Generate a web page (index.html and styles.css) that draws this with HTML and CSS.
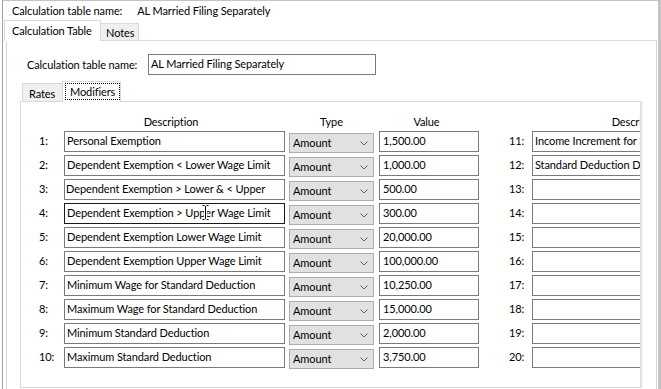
FILE: index.html
```html
<!DOCTYPE html>
<html>
<head>
<meta charset="utf-8">
<link rel="stylesheet" href="styles.css">
</head>
<body>
<div class="frame">
  <div class="title-row">
    <span class="title-label">Calculation table name:</span>
    <span class="title-value">AL Married Filing Separately</span>
  </div>
  <div class="tabs">
    <div class="tab tab-active">Calculation Table</div>
    <div class="tab tab-idle">Notes</div>
  </div>
  <div class="panel">
    <div class="name-row">
      <span class="name-label">Calculation table name:</span>
      <div class="field name-field">AL Married Filing Separately</div>
    </div>
    <div class="subtabs">
      <div class="subtab subtab-idle">Rates</div>
      <div class="subtab subtab-active"><span class="focus">Modifiers</span></div>
    </div>
    <div class="subpanel">
      <div class="grid">
        <div class="hdr hdr-desc c2">Description</div>
        <div class="hdr c3">Type</div>
        <div class="hdr hdr-val c4">Value</div>
        <div class="hdr hdr-desc c6">Description</div>

        <div class="num">1:</div><div class="field desc">Personal Exemption</div><div class="sel">Amount<svg class="chev" width="8" height="5" viewBox="0 0 8 5"><path d="M0.5 0.5 L4 4 L7.5 0.5" fill="none" stroke="#606060"/></svg></div><div class="field val">1,500.00</div><div class="num rnum">11:</div><div class="field desc">Income Increment for Standard Deduction</div>

        <div class="num">2:</div><div class="field desc">Dependent Exemption &lt; Lower Wage Limit</div><div class="sel">Amount<svg class="chev" width="8" height="5" viewBox="0 0 8 5"><path d="M0.5 0.5 L4 4 L7.5 0.5" fill="none" stroke="#606060"/></svg></div><div class="field val">1,000.00</div><div class="num rnum">12:</div><div class="field desc">Standard Deduction Decrement</div>

        <div class="num">3:</div><div class="field desc"><span class="scrolled">Dependent Exemption &gt; Lower &amp; &lt; Upper</span></div><div class="sel">Amount<svg class="chev" width="8" height="5" viewBox="0 0 8 5"><path d="M0.5 0.5 L4 4 L7.5 0.5" fill="none" stroke="#606060"/></svg></div><div class="field val">500.00</div><div class="num rnum">13:</div><div class="field desc"></div>

        <div class="num">4:</div><div class="field desc hover">Dependent Exemption &gt; Upper Wage Limit<svg class="ibeam" width="9" height="17" viewBox="0 0 9 17"><path d="M1.5 1.5 H3.5 M5.5 1.5 H7.5 M4.5 2 V15 M1.5 15.5 H3.5 M5.5 15.5 H7.5" fill="none" stroke="#fff" stroke-width="3"/><path d="M1.5 1.5 H3.5 M5.5 1.5 H7.5 M4.5 2 V15 M1.5 15.5 H3.5 M5.5 15.5 H7.5" fill="none" stroke="#000" stroke-width="1"/></svg></div><div class="sel">Amount<svg class="chev" width="8" height="5" viewBox="0 0 8 5"><path d="M0.5 0.5 L4 4 L7.5 0.5" fill="none" stroke="#606060"/></svg></div><div class="field val">300.00</div><div class="num rnum">14:</div><div class="field desc"></div>

        <div class="num">5:</div><div class="field desc">Dependent Exemption Lower Wage Limit</div><div class="sel">Amount<svg class="chev" width="8" height="5" viewBox="0 0 8 5"><path d="M0.5 0.5 L4 4 L7.5 0.5" fill="none" stroke="#606060"/></svg></div><div class="field val">20,000.00</div><div class="num rnum">15:</div><div class="field desc"></div>

        <div class="num">6:</div><div class="field desc">Dependent Exemption Upper Wage Limit</div><div class="sel">Amount<svg class="chev" width="8" height="5" viewBox="0 0 8 5"><path d="M0.5 0.5 L4 4 L7.5 0.5" fill="none" stroke="#606060"/></svg></div><div class="field val">100,000.00</div><div class="num rnum">16:</div><div class="field desc"></div>

        <div class="num">7:</div><div class="field desc">Minimum Wage for Standard Deduction</div><div class="sel">Amount<svg class="chev" width="8" height="5" viewBox="0 0 8 5"><path d="M0.5 0.5 L4 4 L7.5 0.5" fill="none" stroke="#606060"/></svg></div><div class="field val">10,250.00</div><div class="num rnum">17:</div><div class="field desc"></div>

        <div class="num">8:</div><div class="field desc">Maximum Wage for Standard Deduction</div><div class="sel">Amount<svg class="chev" width="8" height="5" viewBox="0 0 8 5"><path d="M0.5 0.5 L4 4 L7.5 0.5" fill="none" stroke="#606060"/></svg></div><div class="field val">15,000.00</div><div class="num rnum">18:</div><div class="field desc"></div>

        <div class="num">9:</div><div class="field desc">Minimum Standard Deduction</div><div class="sel">Amount<svg class="chev" width="8" height="5" viewBox="0 0 8 5"><path d="M0.5 0.5 L4 4 L7.5 0.5" fill="none" stroke="#606060"/></svg></div><div class="field val">2,000.00</div><div class="num rnum">19:</div><div class="field desc"></div>

        <div class="num">10:</div><div class="field desc">Maximum Standard Deduction</div><div class="sel">Amount<svg class="chev" width="8" height="5" viewBox="0 0 8 5"><path d="M0.5 0.5 L4 4 L7.5 0.5" fill="none" stroke="#606060"/></svg></div><div class="field val">3,750.00</div><div class="num rnum">20:</div><div class="field desc"></div>
      </div>
    </div>
  </div>
</div>
</body>
</html>
```
FILE: styles.css
```css
* { box-sizing: border-box; }
html, body {
  margin: 0;
  padding: 0;
  width: 661px;
  height: 389px;
  overflow: hidden;
  background: #fff;
}
body {
  font-family: "Lato", "Liberation Sans", sans-serif;
  font-size: 11px;
  letter-spacing: -0.1px;
  color: #000;
}
.frame {
  margin-left: 2px;
  width: 659px;
  height: 389px;
  overflow: hidden;
  border-left: 1px solid #a0a0a0;
  border-top: 1px solid #c4c4c4;
  border-right: 3px solid #c4c4c4;
}
.title-row {
  height: 19px;
  padding-left: 9px;
  display: flex;
  align-items: center;
  white-space: nowrap;
}
.title-value { margin-left: 15px; }

.tabs {
  height: 20px;
  display: flex;
  align-items: flex-end;
  padding-left: 1px;
  position: relative;
  z-index: 2;
}
.tab {
  border: 1px solid #d9d9d9;
  border-bottom: none;
  white-space: nowrap;
  display: flex;
  align-items: center;
}
.tab-active {
  width: 97px;
  height: 21px;
  margin-bottom: -1px;
  background: #fff;
  padding-left: 7px;
  padding-bottom: 2px;
}
.tab-idle {
  width: 39px;
  height: 17px;
  margin-left: -1px;
  background: #f0f0f0;
  padding-left: 5px;
  padding-top: 1px;
}

.panel {
  margin-left: 3px;
  margin-right: 1px;
  height: 400px;
  border: 1px solid #d9d9d9;
  position: relative;
  z-index: 1;
}
.name-row {
  margin-top: 13px;
  padding-left: 20px;
  display: flex;
  align-items: center;
}
.name-label {
  width: 121px;
  white-space: nowrap;
}
.field {
  border: 1px solid #7a7a7a;
  background: #fff;
  height: 21px;
  line-height: 18px;
  padding-left: 2px;
  white-space: nowrap;
  overflow: hidden;
}
.name-field { width: 228px; }

.subtabs {
  margin-top: 6px;
  height: 20px;
  padding-left: 15px;
  display: flex;
  align-items: flex-end;
  position: relative;
  z-index: 2;
}
.subtab {
  border: 1px solid #d9d9d9;
  border-bottom: none;
  white-space: nowrap;
  display: flex;
  align-items: center;
}
.subtab-idle {
  width: 41px;
  height: 18px;
  background: #f0f0f0;
  padding-left: 6px;
  padding-top: 1px;
}
.subtab-active {
  width: 59px;
  height: 21px;
  margin-left: -1px;
  margin-bottom: -1px;
  background: #fff;
  padding-left: 2px;
  padding-bottom: 2px;
}
.focus {
  border: 1px dotted #000;
  padding: 0 4px 0 4px;
  line-height: 15px;
}

.subpanel {
  margin-left: 13px;
  width: 621px;
  height: 287px;
  border: 1px solid #d9d9d9;
  box-shadow: 2px 0 0 #f0f0f0;
  overflow: hidden;
  position: relative;
  z-index: 1;
}
.grid {
  padding-top: 11px;
  padding-left: 18px;
  display: grid;
  grid-template-columns: 25px 225px 90px 130px 23px 221px;
  grid-template-rows: 18px;
  grid-auto-rows: 24px;
  align-items: start;
  width: 760px;
}
.hdr {
  line-height: 17px;
  text-align: center;
  white-space: nowrap;
}
.c2 { grid-column: 2; }
.c3 { grid-column: 3; width: 85px; }
.c4 { grid-column: 4; width: 100px; }
.c6 { grid-column: 6; }
.hdr-desc { width: 221px; padding-right: 7px; }
.hdr-val { padding-right: 5px; }
.num {
  line-height: 20px;
  white-space: nowrap;
}
.desc { width: 221px; position: relative; }
.hover { border-color: #1a1a1a; overflow: visible; }
.scrolled { margin-left: -1px; }
.val { width: 100px; padding-left: 3px; }
.sel {
  width: 85px;
  height: 20px;
  margin-top: 2px;
  border: 1px solid #adadad;
  background: #e1e1e1;
  padding-left: 3px;
  padding-bottom: 1px;
  line-height: 17px;
  display: flex;
  align-items: center;
  justify-content: space-between;
  padding-right: 5px;
}
.chev { display: block; margin-top: 1px; }
.ibeam {
  position: absolute;
  left: 136px;
  top: 0px;
}
```
